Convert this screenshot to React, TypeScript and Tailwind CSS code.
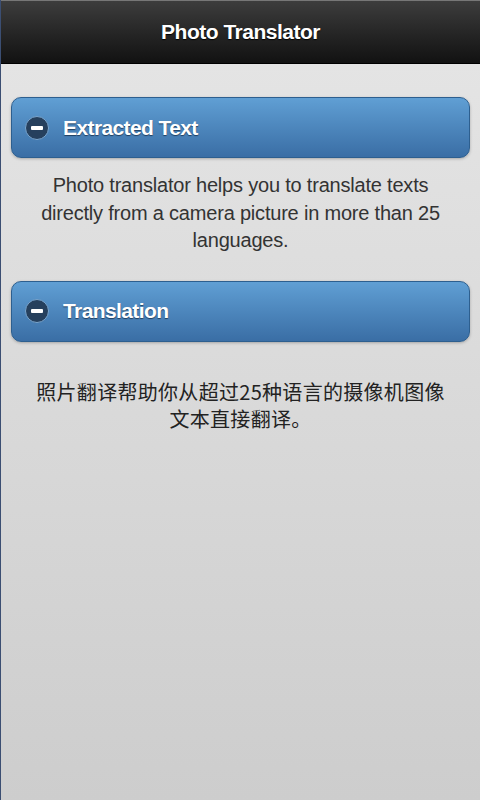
import React from "react";

function Collapsible({ title }: { title: string }) {
  return (
    <div className="mx-[10px] h-[61px] rounded-[10px] border border-[#2d5f8f] bg-gradient-to-b from-[#609fd4] to-[#3a6ea5] flex items-center shadow-[0_1px_3px_rgba(0,0,0,0.25)]">
      <div className="ml-[13px] w-[24px] h-[24px] rounded-full bg-[#26405d] border border-[#7aa6cf] flex items-center justify-center">
        <div className="w-[12px] h-[4px] bg-white rounded-[1px]" />
      </div>
      <span className="ml-[14px] text-white font-bold text-[21px] tracking-[-0.6px] [text-shadow:0_1px_1px_#1f3d5e]">
        {title}
      </span>
    </div>
  );
}

export default function App() {
  return (
    <div
      className="w-[480px] h-[800px] flex flex-col bg-gradient-to-b from-[#e6e6e6] to-[#cdcdcd] border-l border-[#3b4e72]"
      style={{ fontFamily: '"Liberation Sans", Arial, "Noto Sans CJK SC", sans-serif' }}
    >
      <div className="h-[64px] shrink-0 bg-gradient-to-b from-[#3d3d3d] to-[#121212] border-t border-[#777] border-b border-b-black flex items-center justify-center">
        <span className="text-white font-bold text-[21px] tracking-[-0.5px] [text-shadow:0_1px_1px_#000]">
          Photo Translator
        </span>
      </div>
      <div className="pt-[33px]">
        <Collapsible title="Extracted Text" />
        <p className="mt-[14px] mb-[26px] px-[38px] text-center text-[#333] text-[20px] leading-[27.5px] tracking-[-0.2px]">
          Photo translator helps you to translate texts directly from a camera picture in more than 25 languages.
        </p>
        <Collapsible title="Translation" />
        <p
          className="mt-[36px] px-[33px] text-center text-[#222] text-[20px] leading-[27px] tracking-[0.3px]"
          style={{ fontFamily: '"Noto Sans CJK SC", sans-serif' }}
        >
          照片翻译帮助你从超过25种语言的摄像机图像文本直接翻译。
        </p>
      </div>
    </div>
  );
}
